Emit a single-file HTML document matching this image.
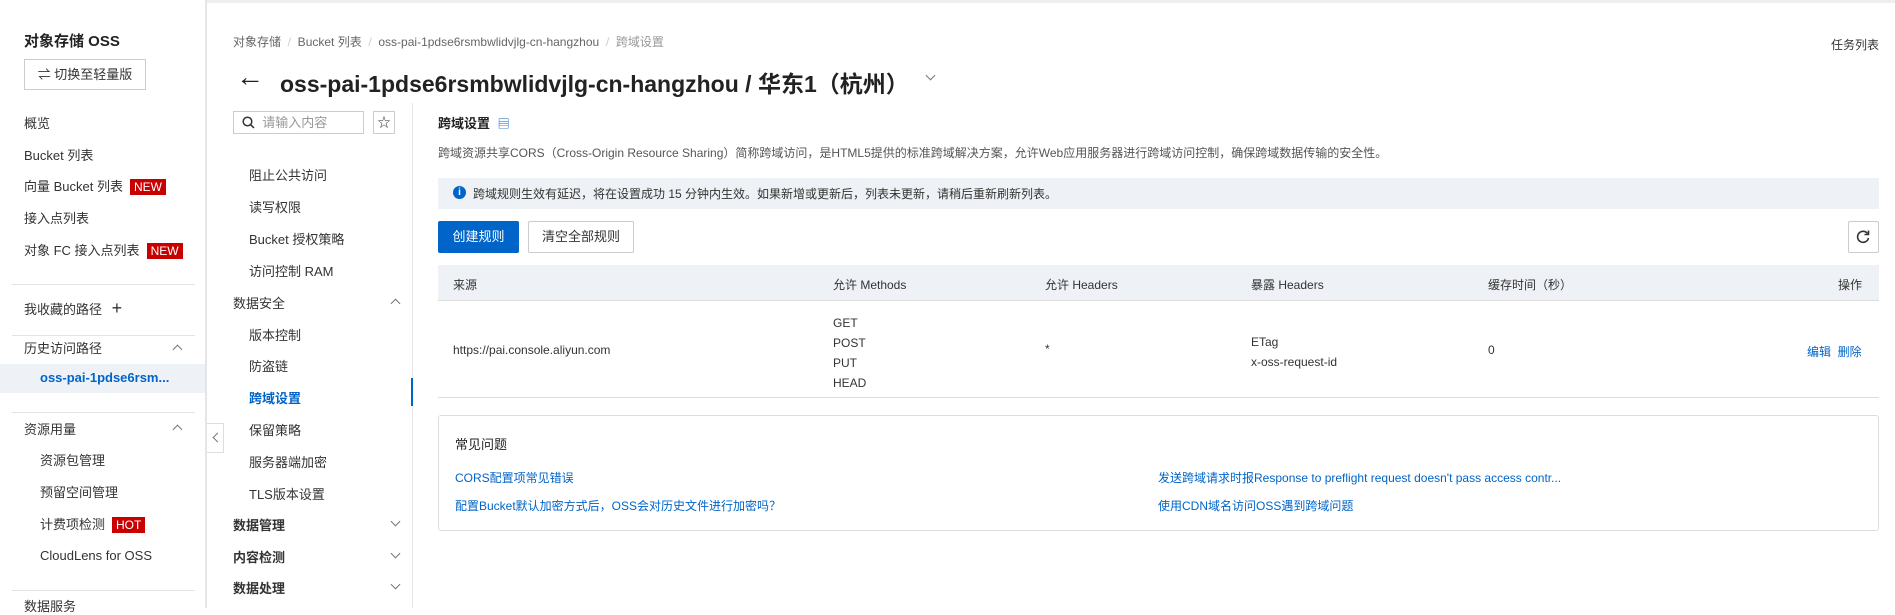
<!DOCTYPE html>
<html><head><meta charset="utf-8"><style>
*{margin:0;padding:0;box-sizing:border-box}
body{width:1895px;height:608px;overflow:hidden;background:#fff;font-family:"Liberation Sans","Noto Sans CJK SC",sans-serif;color:#333;font-size:13px;position:relative}
.a{position:absolute;white-space:nowrap}
.side{position:absolute;left:0;top:0;width:207px;height:608px;border-right:2px solid #e5e5e5;background:#fff}
.top{position:absolute;left:0;top:0;width:1895px;height:3px;background:#eee}
.tag{background:#c80000;color:#fff;font-size:12px;padding:1px 4px;margin-left:7px}
.hr{position:absolute;left:12px;width:183px;height:1px;background:#e3e3e3}
.nav{position:absolute;left:207px;top:103px;width:206px;height:505px;border-right:1px solid #e5e5e5}
.blue{color:#0064c8}
.chev{position:absolute;width:7px;height:7px;border-left:1.3px solid #777;border-top:1.3px solid #777}
</style></head><body>
<div class="top"></div>
<div class="side">
 <div class="a" style="left:24px;top:30px;font-size:15px;font-weight:bold;color:#222">对象存储 OSS</div>
 <div class="a" style="left:24px;top:59px;width:122px;height:31px;border:1px solid #ccc;text-align:center;line-height:29px;font-size:13px">⇌ 切换至轻量版</div>
 <div class="a" style="left:24px;top:113px;font-size:13px">概览</div>
 <div class="a" style="left:24px;top:145px">Bucket 列表</div>
 <div class="a" style="left:24px;top:176px">向量 Bucket 列表<span class="tag">NEW</span></div>
 <div class="a" style="left:24px;top:208px">接入点列表</div>
 <div class="a" style="left:24px;top:240px">对象 FC 接入点列表<span class="tag">NEW</span></div>
 <div class="hr" style="top:284px"></div>
 <div class="a" style="left:24px;top:298px">我收藏的路径 <span style="font-size:18px;margin-left:6px">+</span></div>
 <div class="hr" style="top:335px"></div>
 <div class="a" style="left:24px;top:338px">历史访问路径</div>
 <div class="chev" style="left:174px;top:346px;transform:rotate(45deg)"></div>
 <div class="a" style="left:0;top:364px;width:205px;height:29px;background:#eef1f6"></div>
 <div class="a blue" style="left:40px;top:370px;font-weight:bold">oss-pai-1pdse6rsm...</div>
 <div class="hr" style="top:412px"></div>
 <div class="a" style="left:24px;top:419px">资源用量</div>
 <div class="chev" style="left:174px;top:426px;transform:rotate(45deg)"></div>
 <div class="a" style="left:40px;top:450px">资源包管理</div>
 <div class="a" style="left:40px;top:482px">预留空间管理</div>
 <div class="a" style="left:40px;top:514px">计费项检测<span class="tag">HOT</span></div>
 <div class="a" style="left:40px;top:548px">CloudLens for OSS</div>
 <div class="hr" style="top:590px"></div>
 <div class="a" style="left:24px;top:596px">数据服务</div>
</div>
<div class="a" style="left:207px;top:423px;width:17px;height:30px;border:1px solid #ddd;border-left:none;background:#fff"></div>
<div class="chev" style="left:214px;top:434px;transform:rotate(-45deg)"></div>

<div class="a" style="left:233px;top:33px;font-size:12px;color:#666">对象存储 &nbsp;<span style="color:#ccc">/</span>&nbsp; Bucket 列表 &nbsp;<span style="color:#ccc">/</span>&nbsp; oss-pai-1pdse6rsmbwlidvjlg-cn-hangzhou &nbsp;<span style="color:#ccc">/</span>&nbsp; <span style="color:#999">跨域设置</span></div>
<div class="a" style="left:1831px;top:36px;font-size:12px">任务列表</div>
<div class="a" style="left:236px;top:61px;font-size:28px;color:#222">←</div>
<div class="a" style="left:280px;top:65px;font-size:23px;font-weight:bold;color:#222">oss-pai-1pdse6rsmbwlidvjlg-cn-hangzhou / 华东1（杭州）</div>
<div class="chev" style="left:927px;top:72px;transform:rotate(225deg)"></div>

<div class="nav">
 <div class="a" style="left:26px;top:8px;width:131px;height:23px;border:1px solid #ccc;font-size:13px;color:#999;line-height:21px;padding-left:8px"><svg width="13" height="13" viewBox="0 0 13 13" style="vertical-align:-2px"><circle cx="5.5" cy="5.5" r="4.3" fill="none" stroke="#333" stroke-width="1.5"/><path d="M8.7 8.7 12 12" stroke="#333" stroke-width="1.5"/></svg>&nbsp; 请输入内容</div>
 <div class="a" style="left:166px;top:8px;width:22px;height:23px;border:1px solid #ccc;text-align:center;line-height:21px;font-size:13px">☆</div>
 <div class="a" style="left:42px;top:62px">阻止公共访问</div>
 <div class="a" style="left:42px;top:94px">读写权限</div>
 <div class="a" style="left:42px;top:126px">Bucket 授权策略</div>
 <div class="a" style="left:42px;top:158px">访问控制 RAM</div>
 <div class="a" style="left:26px;top:190px">数据安全</div>
 <div class="chev" style="left:185px;top:197px;transform:rotate(45deg)"></div>
 <div class="a" style="left:42px;top:222px">版本控制</div>
 <div class="a" style="left:42px;top:253px">防盗链</div>
 <div class="a blue" style="left:42px;top:285px;font-weight:bold">跨域设置</div>
 <div class="a" style="left:204px;top:275px;width:2px;height:28px;background:#0064c8"></div>
 <div class="a" style="left:42px;top:317px">保留策略</div>
 <div class="a" style="left:42px;top:349px">服务器端加密</div>
 <div class="a" style="left:42px;top:381px">TLS版本设置</div>
 <div class="a" style="left:26px;top:412px;font-weight:bold">数据管理</div>
 <div class="chev" style="left:185px;top:415px;transform:rotate(225deg)"></div>
 <div class="a" style="left:26px;top:444px;font-weight:bold">内容检测</div>
 <div class="chev" style="left:185px;top:447px;transform:rotate(225deg)"></div>
 <div class="a" style="left:26px;top:475px;font-weight:bold">数据处理</div>
 <div class="chev" style="left:185px;top:478px;transform:rotate(225deg)"></div>
</div>

<div class="a" style="left:438px;top:113px;font-size:13px;font-weight:bold;color:#222">跨域设置 <span class="blue" style="font-weight:normal;font-size:12px;margin-left:4px">▤</span></div>
<div class="a" style="left:438px;top:144px;font-size:12px;color:#555">跨域资源共享CORS（Cross-Origin Resource Sharing）简称跨域访问，是HTML5提供的标准跨域解决方案，允许Web应用服务器进行跨域访问控制，确保跨域数据传输的安全性。</div>
<div class="a" style="left:438px;top:178px;width:1441px;height:31px;background:#eef1f6"></div>
<div class="a" style="left:453px;top:186px;width:13px;height:13px;border-radius:50%;background:#0064c8;color:#fff;font-size:10px;text-align:center;line-height:13px;font-weight:bold">i</div>
<div class="a" style="left:473px;top:185px;font-size:12px;color:#333">跨域规则生效有延迟，将在设置成功 15 分钟内生效。如果新增或更新后，列表未更新，请稍后重新刷新列表。</div>
<div class="a" style="left:438px;top:221px;width:81px;height:32px;background:#0064c8;color:#fff;font-size:13px;text-align:center;line-height:32px;border-radius:2px">创建规则</div>
<div class="a" style="left:528px;top:221px;width:106px;height:32px;border:1px solid #ccc;font-size:13px;text-align:center;line-height:30px;border-radius:2px">清空全部规则</div>
<div class="a" style="left:1848px;top:221px;width:31px;height:32px;border:1px solid #ccc;border-radius:2px"><svg width="29" height="30" viewBox="0 0 29 30"><path d="M18.5 11.5A5.5 5.5 0 1 0 19.5 16" fill="none" stroke="#333" stroke-width="1.6"/><path d="M19.5 8.5v4h-4" fill="none" stroke="#333" stroke-width="1.6"/></svg></div>
<div class="a" style="left:438px;top:265px;width:1441px;height:36px;background:#eef1f6;border-bottom:1px solid #ddd"></div>
<div class="a" style="left:453px;top:276px;font-size:12px">来源</div>
<div class="a" style="left:833px;top:276px;font-size:12px">允许 Methods</div>
<div class="a" style="left:1045px;top:276px;font-size:12px">允许 Headers</div>
<div class="a" style="left:1251px;top:276px;font-size:12px">暴露 Headers</div>
<div class="a" style="left:1488px;top:276px;font-size:12px">缓存时间（秒）</div>
<div class="a" style="left:1838px;top:276px;font-size:12px">操作</div>
<div class="a" style="left:438px;top:397px;width:1441px;height:1px;background:#ddd"></div>
<div class="a" style="left:453px;top:343px;font-size:12px">https://pai.console.aliyun.com</div>
<div class="a" style="left:833px;top:313px;font-size:12px;line-height:20px;white-space:pre">GET
POST
PUT
HEAD</div>
<div class="a" style="left:1045px;top:342px;font-size:12px">*</div>
<div class="a" style="left:1251px;top:332px;font-size:12px;line-height:20px;white-space:pre">ETag
x-oss-request-id</div>
<div class="a" style="left:1488px;top:343px;font-size:12px">0</div>
<div class="a blue" style="left:1807px;top:343px;font-size:12px">编辑 &nbsp;删除</div>
<div class="a" style="left:438px;top:415px;width:1441px;height:116px;border:1px solid #ddd;border-radius:3px"></div>
<div class="a" style="left:455px;top:434px;font-size:13px;color:#222">常见问题</div>
<div class="a blue" style="left:455px;top:469px;font-size:12px">CORS配置项常见错误</div>
<div class="a blue" style="left:455px;top:497px;font-size:12px">配置Bucket默认加密方式后，OSS会对历史文件进行加密吗？</div>
<div class="a blue" style="left:1158px;top:469px;font-size:12px">发送跨域请求时报Response to preflight request doesn't pass access contr...</div>
<div class="a blue" style="left:1158px;top:497px;font-size:12px">使用CDN域名访问OSS遇到跨域问题</div>
</body></html>
